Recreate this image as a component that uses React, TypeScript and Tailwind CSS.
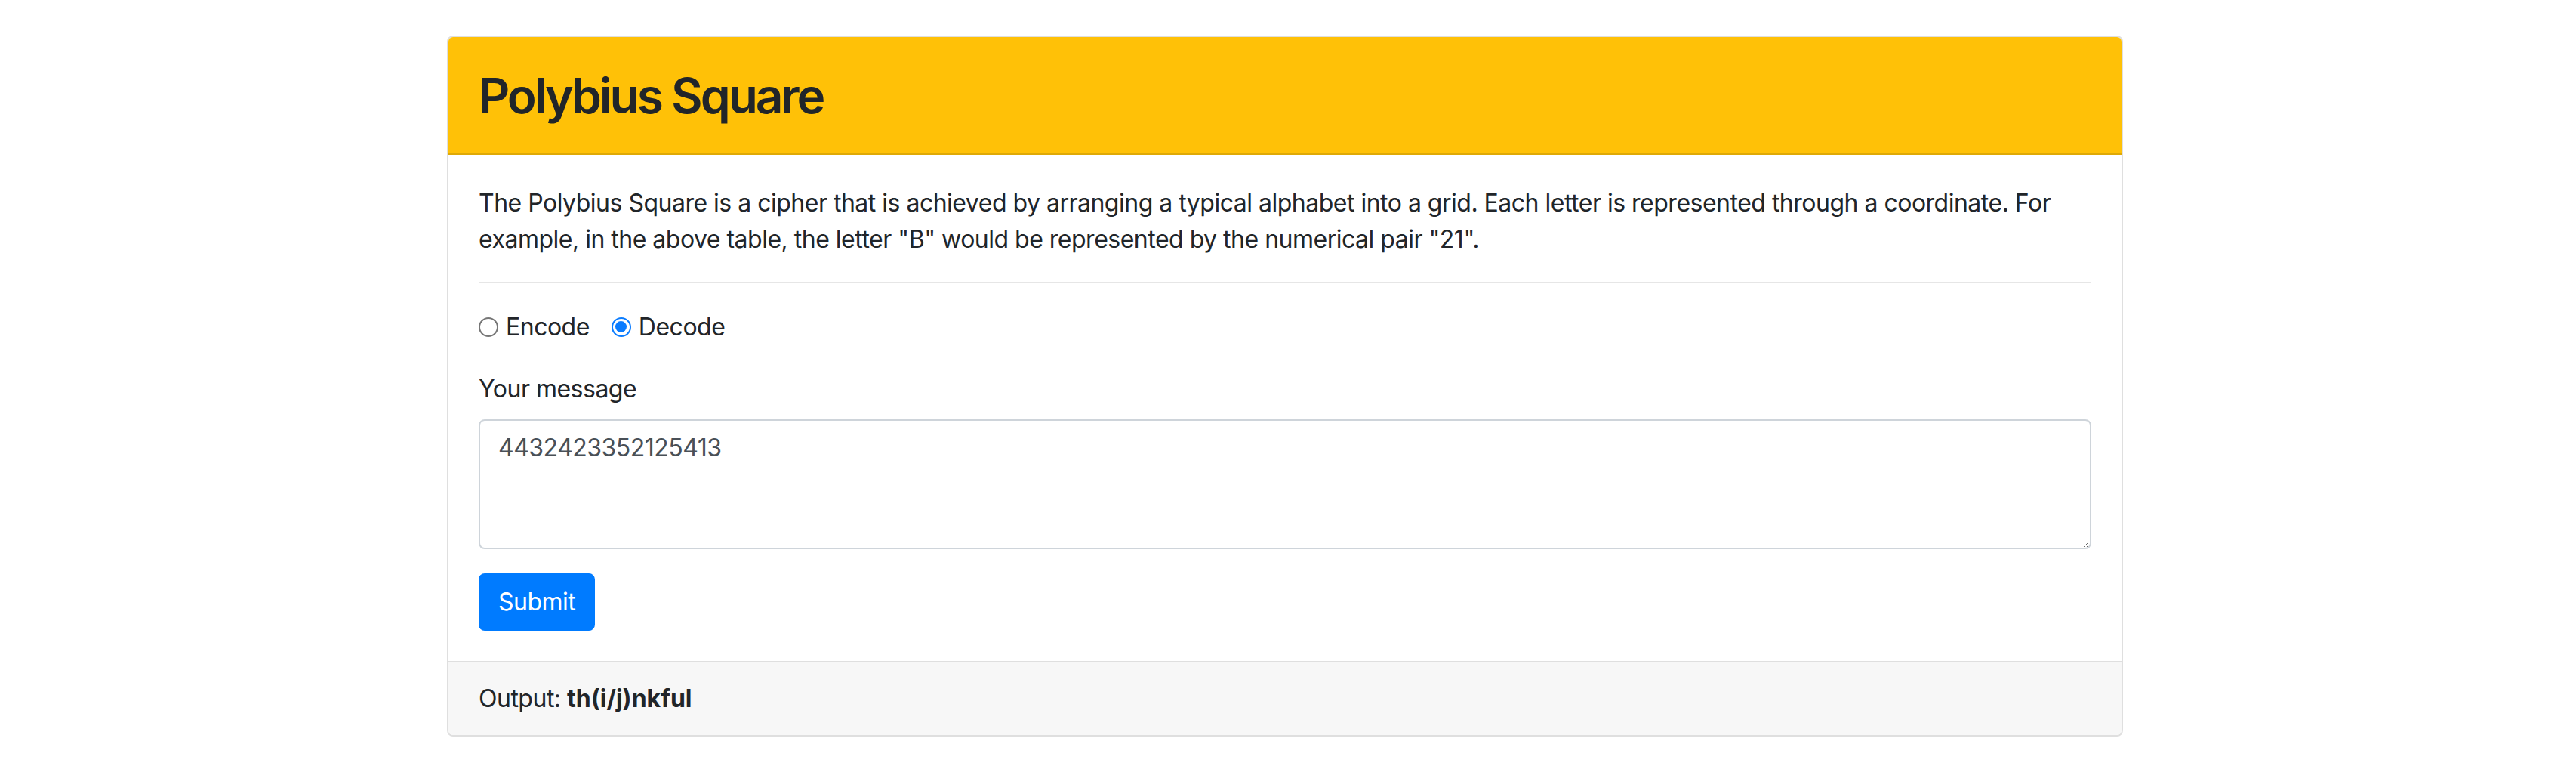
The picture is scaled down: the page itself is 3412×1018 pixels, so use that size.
function Radio({ label, checked }: { label: string; checked?: boolean }) {
  return (
    <label className="mr-[29px] flex items-center">
      {checked ? (
        <span className="mr-[10px] flex h-[26px] w-[26px] items-center justify-center rounded-full border-[2.5px] border-[#0a7cff] bg-white">
          <span className="h-[15px] w-[15px] rounded-full bg-[#0a7cff]" />
        </span>
      ) : (
        <span className="mr-[10px] h-[26px] w-[26px] rounded-full border-2 border-[#767676] bg-white" />
      )}
      <span>{label}</span>
    </label>
  )
}

export default function App() {
  return (
    <div className="min-h-screen bg-white pt-[47px] font-['Inter','Noto_Sans',sans-serif] text-[#212529]">
      <div className="ml-[592px] w-[2220px] overflow-hidden rounded-[8px] border-2 border-[#dfdfdf]">
        <div className="border-b-2 border-[#dfa906] bg-[#ffc107] px-[40px] pt-[40px] pb-[37px]">
          <h2 className="text-[64px] font-semibold leading-[1.2] tracking-[-3px]">Polybius Square</h2>
        </div>

        <div className="px-[40px] pt-[40px] pb-[40px] text-[32px] leading-[48px] tracking-[-0.5px]">
          <p>
            The Polybius Square is a cipher that is achieved by arranging a typical alphabet into a grid. Each
            letter is represented through a coordinate. For example, in the above table, the letter "B" would be
            represented by the numerical pair "21".
          </p>

          <hr className="my-[32px] border-0 border-t-2 border-[#e6e6e6]" />

          <div className="flex items-center pt-[2px]">
            <Radio label="Encode" />
            <Radio label="Decode" checked />
          </div>

          <label className="mt-[34px] mb-[16px] block">Your message</label>
          <textarea
            className="block h-[172px] w-full rounded-[8px] border-2 border-[#ced4da] px-[24px] py-[12px] text-[32px] leading-[48px] tracking-[-0.5px] text-[#495057] outline-none"
            defaultValue="4432423352125413"
            rows={3}
          />

          <button
            className="mt-[32px] h-[76px] rounded-[8px] border-2 border-[#007bff] bg-[#007bff] px-[24px] text-white"
            type="button"
          >
            Submit
          </button>
        </div>

        <div className="border-t-2 border-[#dfdfdf] bg-[#f7f7f7] px-[40px] py-[24px] text-[32px] leading-[48px] tracking-[-0.5px]">
          Output: <strong className="font-bold tracking-normal">th(i/j)nkful</strong>
        </div>
      </div>
    </div>
  )
}
